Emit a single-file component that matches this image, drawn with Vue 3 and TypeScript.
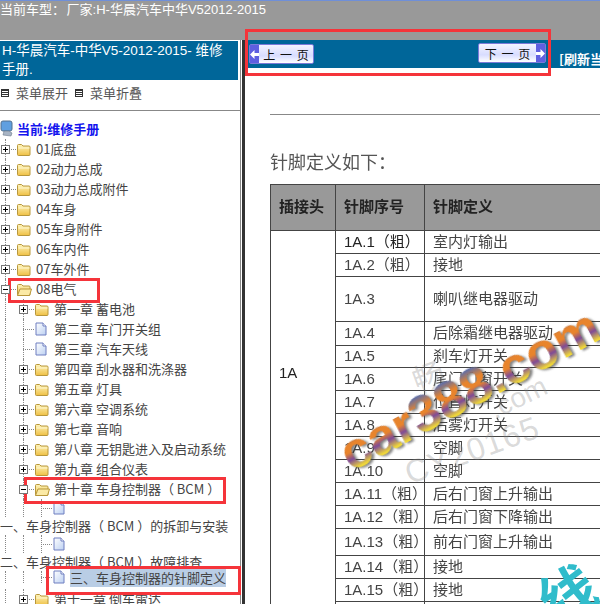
<template>
    <div class="page">
        <div class="topbar">当前车型： 厂家:H-华晨汽车中华V52012-2015</div>
        <div class="main">
            <aside class="side">
                <div class="side__title">H-华晨汽车-中华V5-2012-2015- 维修手册.</div>
                <div class="side__menu">
                    <span class="menu-ico"></span><span class="side__menu-label">菜单展开</span>
                    <span class="menu-ico"></span><span class="side__menu-label">菜单折叠</span>
                </div>
                <div class="tree">
                    <div class="tree__root">
                        <svg class="tree__pc" width="14" height="17" viewBox="0 0 14 17">
                            <defs>
                                <linearGradient id="folderFill" x1="0" y1="0" x2="0" y2="1">
                                    <stop offset="0" stop-color="#fdf4bd" />
                                    <stop offset="1" stop-color="#efc044" />
                                </linearGradient>
                                <linearGradient id="docFill" x1="0" y1="0" x2="1" y2="1">
                                    <stop offset="0" stop-color="#fff" />
                                    <stop offset="1" stop-color="#bcd0f2" />
                                </linearGradient>
                            </defs>
                            <rect x="1" y="1" width="11" height="10" rx="2" fill="#5f9fe0" stroke="#53708f" />
                            <path d="M4 11l-1 4 8 1 1-3-3-2z" fill="#a8b4c4" stroke="#6d7a8c" stroke-width=".6" />
                        </svg>
                        当前:维修手册
                    </div>
                    <div
                        v-for="row in rows"
                        :key="row.label + row.kind + row.h"
                        class="tree__row"
                        :class="['tree__row--' + row.kind, { 'tree__row--sel': row.selected }]"
                        :style="{ height: row.h + 'px' }"
                    >
                        <template v-if="row.kind === 'text'">{{ row.label }}</template>
                        <template v-else>
                            <span v-for="n in row.guides" :key="n" class="tree__guide"></span>
                            <span class="tree__joint">
                                <span v-if="row.exp" class="tree__exp">
                                    <i class="tree__exp-h"></i>
                                    <i v-if="row.exp === '+'" class="tree__exp-v"></i>
                                </span>
                            </span>
                            <svg v-if="row.kind === 'doc'" class="tree__ico" width="12" height="14" viewBox="0 0 12 14">
                                <path d="M1 1h7l3 3v9H1z" fill="url(#docFill)" stroke="#6f7fc0" />
                                <path d="M8 1v3h3" fill="#fff" stroke="#6f7fc0" />
                            </svg>
                            <svg v-else class="tree__ico" width="16" height="15" viewBox="0 0 16 15">
                                <path
                                    d="M1.500 3.500q0-1 1-1h3l1.500 1.500h6q1 0 1 1v7.500q0 1-1 1h-10.500q-1 0-1-1z"
                                    fill="url(#folderFill)"
                                    stroke="#b8973a"
                                />
                                <path
                                    v-if="row.kind === 'open'"
                                    d="M1.500 13.500L4 7H15.500L13.500 13.500z"
                                    fill="#fbeaa6"
                                    stroke="#b8973a"
                                />
                                <path v-else d="M2.500 6h11" stroke="#fff8d0" />
                            </svg>
                            <span class="tree__label" :class="{ 'tree__label--sel': row.selected }">{{ row.label }}</span>
                        </template>
                    </div>
                </div>
            </aside>
            <div class="divider"></div>
            <section class="content">
                <div class="navbar">
                    <button class="navbtn navbtn--prev">
                        <span class="navbtn__arrow">
                            <svg width="9" height="9" viewBox="0 0 9 9"><path d="M0 4.500L4.500 0v3H9v3H4.500v3z" fill="#fff" /></svg>
                        </span>
                        <span class="navbtn__text">上 一 页</span>
                    </button>
                    <button class="navbtn navbtn--next">
                        <span class="navbtn__text">下 一 页</span>
                        <span class="navbtn__arrow">
                            <svg width="9" height="9" viewBox="0 0 9 9"><path d="M9 4.500L4.500 0v3H0v3h4.500v3z" fill="#fff" /></svg>
                        </span>
                    </button>
                    <span class="navbar__refresh">[刷新当</span>
                </div>
                <div class="doc">
                    <hr class="doc__rule" />
                    <h2 class="doc__title">针脚定义如下：</h2>
                    <table class="pins">
                        <colgroup>
                            <col class="pins__c1" />
                            <col class="pins__c2" />
                            <col class="pins__c3" />
                        </colgroup>
                        <tbody>
                            <tr class="pins__head">
                                <th>插接头</th>
                                <th>针脚序号</th>
                                <th>针脚定义</th>
                            </tr>
                            <tr v-for="(pin, i) in pins" :key="pin.no" :style="{ height: pin.h + 'px' }">
                                <td v-if="i === 0" class="pins__conn" :rowspan="pins.length">1A</td>
                                <td>{{ pin.no }}</td>
                                <td>{{ pin.def }}</td>
                            </tr>
                        </tbody>
                    </table>
                </div>
            </section>
        </div>

        <!-- watermarks on top of the scan -->
        <div class="wm wm--gray wm--g1">畅</div>
        <div class="wm wm--gray wm--g2">CY20165</div>
        <div class="wm wm--gray wm--g3">.com</div>
        <div class="wm wm--logo">car388.com</div>
        <div class="wm wm--cyan">线</div>

        <!-- red annotation boxes -->
        <div class="mark mark--nav"></div>
        <div class="mark mark--m08"></div>
        <div class="mark mark--m10"></div>
        <div class="mark mark--pin"></div>
    </div>
</template>

<script setup lang="ts">
interface TreeRow {
    kind: 'folder' | 'open' | 'doc' | 'text';
    label: string;
    guides: number;
    exp: '' | '+' | '-';
    h: number;
    selected?: boolean;
}

interface Pin {
    no: string;
    def: string;
    h: number;
}

const top = (label: string, open = false): TreeRow => ({
    kind: open ? 'open' : 'folder',
    label,
    guides: 0,
    exp: open ? '-' : '+',
    h: 20,
});
const chapter = (label: string): TreeRow => ({ kind: 'folder', label, guides: 1, exp: '+', h: 20 });
const leaf = (label: string): TreeRow => ({ kind: 'doc', label, guides: 1, exp: '', h: 20 });

const rows: TreeRow[] = [
    top('01底盘'),
    top('02动力总成'),
    top('03动力总成附件'),
    top('04车身'),
    top('05车身附件'),
    top('06车内件'),
    top('07车外件'),
    top('08电气', true),
    chapter('第一章 蓄电池'),
    leaf('第二章 车门开关组'),
    leaf('第三章 汽车天线'),
    chapter('第四章 刮水器和洗涤器'),
    chapter('第五章 灯具'),
    chapter('第六章 空调系统'),
    chapter('第七章 音响'),
    chapter('第八章 无钥匙进入及启动系统'),
    chapter('第九章 组合仪表'),
    { kind: 'open', label: '第十章 车身控制器（ BCM ）', guides: 1, exp: '-', h: 20 },
    { kind: 'doc', label: '', guides: 2, exp: '', h: 18 },
    { kind: 'text', label: '一、车身控制器（ BCM ）的拆卸与安装', guides: 0, exp: '', h: 18 },
    { kind: 'doc', label: '', guides: 2, exp: '', h: 18 },
    { kind: 'text', label: '二、车身控制器（ BCM ）故障排查', guides: 0, exp: '', h: 18 },
    { kind: 'doc', label: '三、车身控制器的针脚定义', guides: 2, exp: '', h: 18, selected: true },
    chapter('第十一章 倒车雷达'),
];

const pins: Pin[] = [
    { no: '1A.1（粗）', def: '室内灯输出', h: 23 },
    { no: '1A.2（粗）', def: '接地', h: 23 },
    { no: '1A.3', def: '喇叭继电器驱动', h: 45 },
    { no: '1A.4', def: '后除霜继电器驱动', h: 24 },
    { no: '1A.5', def: '刹车灯开关', h: 22 },
    { no: '1A.6', def: '尾门门窗开关', h: 23 },
    { no: '1A.7', def: '位置灯开关', h: 23 },
    { no: '1A.8', def: '后雾灯开关', h: 23 },
    { no: '1A.9', def: '空脚', h: 23 },
    { no: '1A.10', def: '空脚', h: 23 },
    { no: '1A.11（粗）', def: '后右门窗上升输出', h: 23 },
    { no: '1A.12（粗）', def: '后右门窗下降输出', h: 23 },
    { no: '1A.13（粗）', def: '前右门窗上升输出', h: 27 },
    { no: '1A.14（粗）', def: '接地', h: 23 },
    { no: '1A.15（粗）', def: '接地', h: 23 },
    { no: '1A.16', def: '', h: 23 },
];
</script>

<style>
html,
body {
    margin: 0;
    background: #fff;
}
</style>

<style scoped>
.page {
    position: relative;
    width: 600px;
    height: 604px;
    overflow: hidden;
    display: flex;
    flex-direction: column;
    font-family: "Noto Sans CJK SC", "Liberation Sans", sans-serif;
    background: #fff;
}
.topbar {
    height: 39px;
    flex: none;
    background: #999;
    border-top: 1px solid #6f8fd8;
    color: #fff;
    font-size: 13px;
    line-height: 17px;
    white-space: nowrap;
    word-spacing: -2px;
    font-family: "Liberation Sans", "Noto Sans CJK SC", sans-serif;
}
.main {
    flex: 1;
    display: flex;
    min-height: 0;
}
.side {
    width: 240px;
    flex: none;
    border-right: 1px solid #888;
    background: #fff;
    overflow: hidden;
}
.side__title {
    margin-top: 1px;
    width: 228px;
    height: 39px;
    padding: 0 8px 0 2px;
    background: #006699;
    color: #fff;
    font-size: 13.500px;
    line-height: 19px;
    font-family: "Liberation Sans", "Noto Sans CJK SC", sans-serif;
}
.side__menu {
    display: flex;
    align-items: flex-start;
    height: 26px;
    padding: 4px 0 0 1px;
    border-bottom: 1px solid #888;
    font-size: 13px;
    line-height: 18px;
    color: #555;
}
.side__menu-label {
    margin: 0 7px 0 7px;
}
.menu-ico {
    width: 6px;
    height: 6px;
    margin-top: 5px;
    border: 1px solid #333;
    background: repeating-linear-gradient(#333 0 1px, #fff 1px 2px);
}
.tree {
    padding-top: 7px;
    font-size: 13px;
    line-height: 18px;
    color: #444;
}
.tree__root {
    display: flex;
    align-items: center;
    gap: 3px;
    height: 21px;
    color: #1414ee;
    font-weight: 700;
    font-size: 13px;
}
.tree__pc {
    flex: none;
}
.tree__row {
    display: flex;
    align-items: center;
    box-sizing: border-box;
    white-space: nowrap;
}
.tree__row--sel {
    padding-bottom: 6px;
}
.tree__guide {
    align-self: stretch;
    width: 18px;
    margin-left: 5px;
    margin-right: -5px;
    border-left: 1px dotted #888;
    box-sizing: border-box;
    flex: none;
}
.tree__joint {
    position: relative;
    width: 16px;
    flex: none;
    align-self: stretch;
    display: flex;
    align-items: center;
}
.tree__joint::before {
    content: "";
    position: absolute;
    left: 5px;
    top: 0;
    bottom: 0;
    border-left: 1px dotted #888;
}
.tree__joint::after {
    content: "";
    position: absolute;
    left: 5px;
    right: 0;
    top: 50%;
    border-top: 1px dotted #888;
}
.tree__exp {
    position: relative;
    z-index: 1;
    width: 7px;
    height: 7px;
    margin-left: 1px;
    border: 1px solid #777;
    background: #fff;
    flex: none;
}
.tree__exp-h {
    position: absolute;
    left: 1px;
    right: 1px;
    top: 3px;
    height: 1px;
    background: #000;
}
.tree__exp-v {
    position: absolute;
    top: 1px;
    bottom: 1px;
    left: 3px;
    width: 1px;
    background: #000;
}
.tree__ico {
    flex: none;
    margin-right: 4px;
}
.tree__row--doc .tree__ico {
    margin-left: 1px;
    margin-right: 7px;
}
.tree__label--sel {
    margin-left: -2px;
    background: #b9cde5;
    line-height: 19px;
}
.divider {
    width: 3px;
    flex: none;
    margin-left: 1px;
    background: #333;
}
.content {
    flex: 1;
    min-width: 0;
    background: #fff;
}
.navbar {
    height: 28px;
    display: flex;
    align-items: flex-start;
    padding-left: 4px;
    background: #006699;
    white-space: nowrap;
    overflow: hidden;
}
.navbtn {
    flex: none;
    display: flex;
    align-items: center;
    height: 20px;
    padding: 0;
    border: 1px solid #7a7ad8;
    border-radius: 2px;
    background: linear-gradient(#f4f4ff, #d8dcff 60%, #fff);
    color: #111;
    font-family: "Noto Sans CJK SC", sans-serif;
    font-size: 12px;
}
.navbtn--prev {
    width: 65px;
    margin-top: 4px;
}
.navbtn--next {
    width: 68px;
    margin: 3px 0 0 164px;
}
.navbtn__text {
    flex: 1;
    text-align: center;
    word-spacing: 2px;
}
.navbtn__arrow {
    width: 9px;
    align-self: stretch;
    display: flex;
    align-items: center;
    justify-content: center;
    background: #5f5fe0;
}
.navbar__refresh {
    flex: none;
    margin: 10px 0 0 13px;
    color: #fff;
    font-size: 13px;
    font-weight: 700;
    line-height: 18px;
}
.doc {
    padding-left: 25px;
    filter: blur(0.35px);
}
.doc__rule {
    margin: 46px 0 0;
    height: 1px;
    border: 0;
    background: #888;
    width: 340px;
}
.doc__title {
    margin: 35px 0 0;
    height: 34px;
    line-height: 22px;
    color: #555;
    font-size: 18px;
    font-weight: 400;
}
.pins {
    width: 404px;
    table-layout: fixed;
    border-collapse: collapse;
    border: 1px solid #444;
    font-size: 15px;
    line-height: 18px;
    color: #444;
}
.pins__c1 {
    width: 65px;
}
.pins__c2 {
    width: 89px;
}
.pins th,
.pins td {
    border: 1px solid #444;
    padding: 0 0 1px 8px;
    text-align: left;
    white-space: nowrap;
    font-family: "Liberation Sans", "Noto Sans CJK SC", sans-serif;
}
.pins__head {
    height: 46px;
    background: #999;
    color: #222;
}
.pins__head th {
    font-size: 15px;
    font-weight: 700;
}
.pins td + td {
    color: #222;
}
.pins td:last-child {
    color: #444;
}
.pins .pins__conn {
    vertical-align: top;
    padding-top: 133px;
    color: #222;
}
.wm {
    position: absolute;
    white-space: nowrap;
    pointer-events: none;
    font-family: "Liberation Sans", "Noto Sans CJK SC", sans-serif;
}
.wm--gray {
    color: rgba(130, 130, 130, 0.3);
    font-size: 32px;
}
.wm--g1 {
    left: 412px;
    top: 352px;
    transform: rotate(-20deg);
}
.wm--g2 {
    left: 402px;
    top: 432px;
    transform: rotate(-20deg);
    letter-spacing: 1px;
}
.wm--g3 {
    left: 488px;
    top: 382px;
    font-size: 28px;
    transform: rotate(-26deg);
}
.wm--logo {
    left: 326px;
    top: 359px;
    font-size: 52px;
    line-height: 60px;
    font-weight: 700;
    transform: rotate(-28deg);
    background: linear-gradient(180deg, #5d6ea8 20%, #e8842c 38%, #e8842c 50%, #7d4a98 62%, #f0d838 78%);
    -webkit-background-clip: text;
    background-clip: text;
    color: transparent;
    filter: drop-shadow(2px 2px 1px rgba(50, 50, 50, 0.6));
}
.wm--cyan {
    left: 540px;
    top: 566px;
    font-size: 56px;
    line-height: 60px;
    font-weight: 700;
    color: #30bccb;
    transform: rotate(-28deg);
}
.mark {
    position: absolute;
    border: 3px solid #f5343a;
    box-sizing: border-box;
    pointer-events: none;
}
.mark--nav {
    left: 245px;
    top: 29px;
    width: 306px;
    height: 47px;
}
.mark--m08 {
    left: 8px;
    top: 278px;
    width: 92px;
    height: 25px;
}
.mark--m10 {
    left: 24px;
    top: 477px;
    width: 202px;
    height: 27px;
}
.mark--pin {
    left: 46px;
    top: 566px;
    width: 195px;
    height: 29px;
}
</style>
